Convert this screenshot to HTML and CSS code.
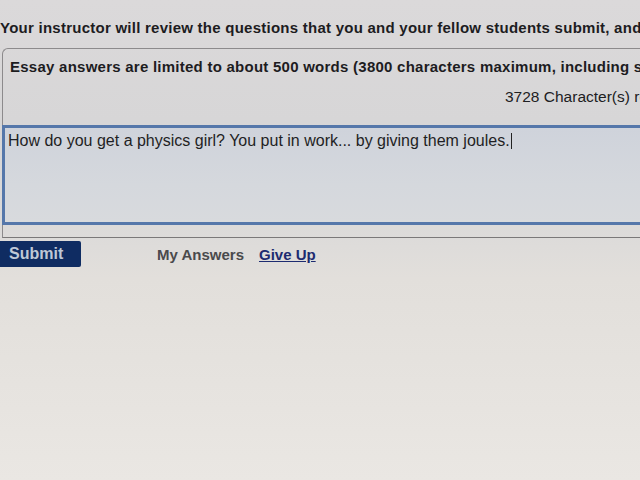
FILE: index.html
```html
<!DOCTYPE html>
<html>
<head>
<meta charset="utf-8">
<link rel="stylesheet" href="styles.css">
</head>
<body>
<div class="page">
  <p class="intro">Your instructor will review the questions that you and your fellow students submit, and decide which ones to use.</p>
  <div class="box">
    <p class="note">Essay answers are limited to about 500 words (3800 characters maximum, including spaces).</p>
    <p class="count">3728 Character(s) remaining</p>
    <div class="answer">How do you get a physics girl? You put in work... by giving them joules.<span class="caret"></span></div>
  </div>
  <div class="actions">
    <button class="submit">Submit</button>
    <span class="mine">My Answers</span>
    <a class="giveup" href="#">Give Up</a>
  </div>
</div>
</body>
</html>
```
FILE: styles.css
```css
html, body {
  margin: 0;
  padding: 0;
}
body {
  font-family: "Liberation Sans", Arial, sans-serif;
  overflow: hidden;
}
.page {
  width: 640px;
  height: 480px;
  overflow: hidden;
  background: linear-gradient(180deg, #dbd9da 0%, #d7d6d7 25%, #dad9d9 45%, #e2dfdb 58%, #e6e3df 80%, #eae7e3 100%);
  padding-top: 20px;
  box-sizing: border-box;
}
.intro {
  margin: 0;
  font-size: 15px;
  font-weight: bold;
  color: #1d1c1f;
  white-space: nowrap;
  line-height: 16px;
  letter-spacing: 0.25px;
}
.box {
  margin: 12px -20px 0 2px;
  border: 1px solid #8c8a8c;
  border-right: none;
  border-top-left-radius: 6px;
  border-bottom: 1px solid #7a7879;
  padding-top: 10px;
  padding-bottom: 12px;
}
.note {
  margin: 0 0 0 7px;
  font-size: 15px;
  font-weight: bold;
  color: #1d1c1f;
  white-space: nowrap;
  line-height: 16px;
  letter-spacing: 0.25px;
}
.count {
  margin: 14px 0 0 0;
  padding-left: 502px;
  font-size: 15.5px;
  color: #202022;
  white-space: nowrap;
  line-height: 16px;
}
.answer {
  margin: 20px 0 0 -1px;
  height: 90px;
  border: 3px solid #5577aa;
  border-right: none;
  background: linear-gradient(180deg, #cfd3db 0%, #d5d8dd 60%, #d8dadd 100%);
  padding: 4px 0 0 3px;
  font-size: 16px;
  color: #1f1f24;
  white-space: nowrap;
  line-height: 17px;
}
.caret {
  display: inline-block;
  width: 1px;
  height: 16px;
  background: #222;
  vertical-align: -3px;
  margin-left: 1px;
}
.actions {
  display: flex;
  align-items: center;
  margin-top: 3px;
  height: 26px;
}
.submit {
  width: 81px;
  height: 26px;
  background: #0f2c62;
  border: none;
  border-radius: 0 2px 2px 0;
  color: #bfc8d6;
  font-family: "Liberation Sans", Arial, sans-serif;
  font-size: 16px;
  font-weight: bold;
  text-align: left;
  padding: 0 0 0 9px;
}
.mine {
  margin-left: 76px;
  font-size: 15px;
  font-weight: bold;
  color: #4a4a4c;
}
.giveup {
  margin-left: 15px;
  font-size: 15px;
  font-weight: bold;
  color: #1d2b70;
  text-decoration: underline;
}
```
